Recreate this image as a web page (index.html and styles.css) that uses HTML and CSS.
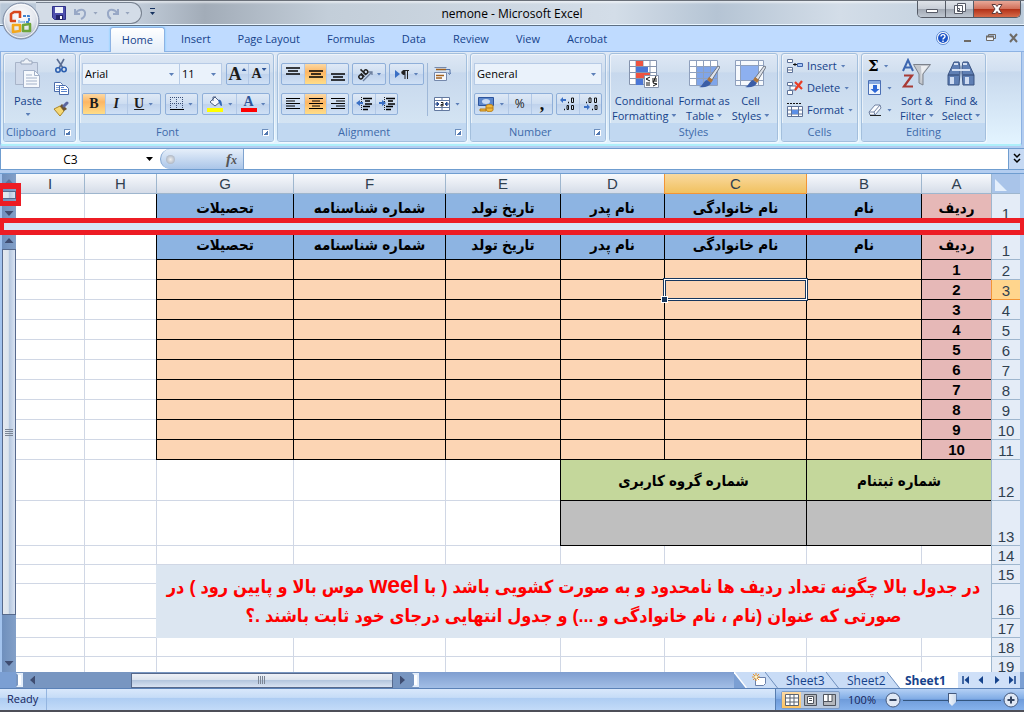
FILE: index.html
```html
<!DOCTYPE html>
<html lang="en">
<head>
<meta charset="utf-8">
<title>nemone - Microsoft Excel</title>
<link rel="stylesheet" href="styles.css">
</head>
<body>
<div class="app">
  <header class="titlebar">
    <button class="office" aria-label="Office Button">
      <svg width="40" height="40" viewBox="0 0 40 40">
        <defs><radialGradient id="orb" cx=".5" cy=".35" r=".65"><stop offset="0" stop-color="#fff"/><stop offset=".6" stop-color="#e3e7ee"/><stop offset="1" stop-color="#a9b4c6"/></radialGradient></defs>
        <circle cx="20" cy="20" r="18" fill="url(#orb)" stroke="#7d8ba3"/>
        <circle cx="20" cy="20" r="16.500" fill="none" stroke="#fff" stroke-opacity=".8"/>
        <g fill="none" stroke-width="2.600" stroke-linejoin="round">
          <path d="M15 20h-5v-7l3-2h6v6" stroke="#d8461b"/>
          <path d="M22 15h6v6h-5" stroke="#4184d0" stroke-width="2" stroke-dasharray="3 1"/>
          <path d="M19 24v6l-7 1v-7z" stroke="#f3a71b"/>
          <path d="M22 24v6h7v-7z" stroke="#6da53a"/>
          <path d="M18 19v3M19 21h5" stroke="#8fb8e6" stroke-width="1.500"/>
        </g>
      </svg>
    </button>
    <div class="qat">
      <button aria-label="Save"><svg width="14" height="14" viewBox="0 0 14 14"><path d="M.5.5h13v13h-11l-2-2z" fill="#4d4fae" stroke="#30328a"/><path d="M3 1h8v6H3z" fill="#eef2fb"/><path d="M4 9h7v5H4z" fill="#23246a"/><path d="M8 10h2v3H8z" fill="#fff"/></svg></button>
      <button aria-label="Undo"><svg width="13" height="13" viewBox="0 0 13 13"><path d="M1 2v5h5M1.500 6.500C5 1 12 2 11 7c0 2-2 4-4 5" fill="none" stroke="#98a8c6" stroke-width="2"/></svg></button>
      <i class="dd pale"></i>
      <button aria-label="Redo"><svg width="13" height="13" viewBox="0 0 13 13"><path d="M12 2v5H7M11.500 6.500C8 1 1 2 2 7c0 2 1 4 3 5" fill="none" stroke="#98a8c6" stroke-width="2"/></svg></button>
      <i class="dd pale"></i>
    </div>
    <button class="qat-more" aria-label="Customize Quick Access Toolbar"><svg width="7" height="8" viewBox="0 0 7 8"><path d="M1 .5h5" stroke="#15315f"/><path d="M1 4h5L3.500 7z" fill="#15315f"/></svg></button>
    <h1 class="title">nemone - Microsoft Excel</h1>
    <div class="winbtns">
      <button aria-label="Minimize"><svg width="14" height="14" viewBox="0 0 14 14"><path d="M1.500 7.500h11v3h-11z" fill="#fff" stroke="#565a66"/></svg></button>
      <button aria-label="Restore"><svg width="14" height="14" viewBox="0 0 14 14"><path d="M4.500 1.500h8v8h-8zM1.500 3.500h8v8h-8zM4.500 6.500h2v2h-2z" fill="#fff" stroke="#565a66"/></svg></button>
      <button class="close" aria-label="Close"><svg width="14" height="14" viewBox="0 0 14 14"><path d="M2 2.500h3.500L7 4.500l1.500-2H12L9 7l3 4.500H8.500L7 9.500l-1.500 2H2L5 7z" fill="#fff" stroke="#5e3a3a"/></svg></button>
    </div>
  </header>

  <nav class="tabs">
    <button>Menus</button><button class="on">Home</button><button>Insert</button><button>Page Layout</button><button>Formulas</button><button>Data</button><button>Review</button><button>View</button><button>Acrobat</button>
    <div class="docbtns">
      <button aria-label="Help"><svg width="14" height="14" viewBox="0 0 14 14"><circle cx="7" cy="7" r="6.500" fill="#fff" stroke="#5b87d0"/><circle cx="7" cy="7" r="5" fill="#1d55c8"/><path d="M5 5.500c0-2.500 4-2.500 4 0 0 1.500-2 1.300-2 3M7 9.500V11" fill="none" stroke="#fff" stroke-width="1.400"/></svg></button>
      <button aria-label="Minimize workbook"><svg width="10" height="10" viewBox="0 0 10 10"><path d="M1 8h7" stroke="#6f6b66" stroke-width="2"/></svg></button>
      <button aria-label="Restore workbook"><svg width="10" height="10" viewBox="0 0 10 10"><path d="M2.500 3V1.500h7v4H8" fill="none" stroke="#6f6b66"/><path d="M.5 3.500h7v4h-7z" fill="#e8f0fb" stroke="#6f6b66"/><path d="M0 3.500h8" stroke="#6f6b66" stroke-width="2"/></svg></button>
      <button aria-label="Close workbook"><svg width="10" height="10" viewBox="0 0 10 10"><path d="M1 1l7 8M8 1L1 9" stroke="#6f6b66" stroke-width="2"/></svg></button>
    </div>
  </nav>

  <section class="ribbon">
    <div class="group g-clip">
      <div class="body">
        <button class="big paste"><svg width="32" height="32" viewBox="0 0 32 32"><path d="M3.500 4.500h22v22h-22z" fill="#cfd9ea" stroke="#a8b4c9"/><path d="M9 6V3h3c0-3 5-3 5 0h3v3z" fill="#eef2f8" stroke="#9aa7bd"/><path d="M11.500 12.500h11l5 5v12h-16z" fill="#f6f9fd" stroke="#a3b1c9"/><path d="M22.500 12.500v5h5M14 17h6M14 20h11M14 23h11M14 26h11" fill="none" stroke="#a3b1c9"/></svg><span>Paste</span><i class="dd"></i></button>
        <div class="col">
          <button aria-label="Cut"><svg width="16" height="16" viewBox="0 0 16 16"><path d="M4 1l6 9M11 1L6 10" stroke="#5b6e93" stroke-width="1.600"/><circle cx="5" cy="12" r="2.200" fill="none" stroke="#2c5fb0" stroke-width="1.600"/><circle cx="11" cy="11.500" r="2.200" fill="none" stroke="#2c5fb0" stroke-width="1.600"/></svg></button>
          <button aria-label="Copy"><svg width="16" height="16" viewBox="0 0 16 16"><path d="M1.500 2.500h6l2 2v7h-8z" fill="#fff" stroke="#4b6cab"/><path d="M3 5.500h4M3 7.500h4M3 9.500h3" stroke="#7f9fd6"/><path d="M6.500 5.500h6l3 3v6h-9z" fill="#fff" stroke="#4b6cab"/><path d="M8 9.500h6M8 11.500h6M8 7.500h3" stroke="#5b84cc"/></svg></button>
          <button aria-label="Format Painter"><svg width="16" height="16" viewBox="0 0 16 16"><path d="M1 8l6-3 4 5-4 5z" fill="#f5d774" stroke="#a98527"/><path d="M7 5l2-2 5 5-3 2z" fill="#6b5333"/><path d="M11 5l3-3" stroke="#5a67a0" stroke-width="3" stroke-linecap="round"/></svg></button>
        </div>
      </div>
      <div class="cap">Clipboard<i class="launch"></i></div>
    </div>

    <div class="group g-font">
      <div class="body rows">
        <div class="row">
          <span class="combos"><span class="combo"><select aria-label="Font"><option>Arial</option></select></span><span class="combo size"><select aria-label="Font size"><option>11</option></select></span></span>
          <span class="btns"><button class="serif" aria-label="Grow Font"><b class="l">A</b><i class="up"></i></button><button class="serif" aria-label="Shrink Font"><b class="s">A</b><i class="dn"></i></button></span>
        </div>
        <div class="row">
          <span class="btns"><button class="serif hot"><b>B</b></button><button class="serif"><em>I</em></button><button class="serif wide"><u>U</u><i class="dd"></i></button></span>
          <span class="btns"><button class="bord" aria-label="Borders"><svg width="14" height="14" viewBox="0 0 14 14"><path d="M.5 0v12M6.500 0v12M12.500 0v12M0 .5h13M0 6.500h13" stroke="#3b4f77" stroke-dasharray="1 1"/><path d="M0 12.500h14" stroke="#000" stroke-width="1"/></svg><i class="dd"></i></button></span>
          <span class="btns"><button class="wide" aria-label="Fill Color"><svg width="17" height="16" viewBox="0 0 17 16"><path d="M3 6l5-5 5 5-5 4z" fill="#f4f7fc" stroke="#4f6084"/><path d="M6 5V1h3" fill="none" stroke="#4f6084"/><path d="M11 4c3-1 4 2 4 6-2 0-2-2-3-3z" fill="#3367b8"/><path d="M0 12h16v4H0z" fill="#ff0"/></svg><i class="dd"></i></button><button class="wide" aria-label="Font Color"><span class="fc">A</span><i class="dd"></i></button></span>
        </div>
      </div>
      <div class="cap">Font<i class="launch"></i></div>
    </div>

    <div class="group g-align">
      <div class="body split">
        <div class="rows">
          <div class="row">
            <span class="btns"><button aria-label="Top Align"><svg width="14" height="16" viewBox="0 0 14 16"><path d="M0 2h14M2 5h10M0 8h14" stroke="#000" stroke-width="1.500"/></svg></button><button class="hot" aria-label="Middle Align"><svg width="14" height="16" viewBox="0 0 14 16"><path d="M0 5h14M2 8h10M0 11h14" stroke="#000" stroke-width="1.500"/></svg></button><button aria-label="Bottom Align"><svg width="14" height="16" viewBox="0 0 14 16"><path d="M0 8h14M2 11h10M0 14h14" stroke="#000" stroke-width="1.500"/></svg></button></span>
            <span class="btns"><button class="bord" aria-label="Orientation"><svg width="16" height="16" viewBox="0 0 16 16"><path d="M6 15L15 6M12 6h3v3" fill="none" stroke="#6d7f9e" stroke-width="1.300"/><g transform="rotate(-45 6 8)" fill="none" stroke="#222" stroke-width="1.500"><circle cx="2.500" cy="8.500" r="2"/><path d="M5 6v5M7.500 3v8"/><circle cx="9.500" cy="8.500" r="2"/></g></svg><i class="dd"></i></button></span>
            <span class="btns"><button class="wide" aria-label="Text Direction"><svg width="15" height="12" viewBox="0 0 15 12"><path d="M0 2l5 4-5 4z" fill="#3a6fc4"/><path d="M9.500 2.500H9c-3 0-3 4 0 4h.5zM10 2v9M12.500 2v9M9 2.500h5" fill="#222" stroke="#222"/></svg><i class="dd"></i></button></span>
          </div>
          <div class="row">
            <span class="btns"><button aria-label="Align Left"><svg width="14" height="12" viewBox="0 0 14 12"><path d="M0 .5h14M0 3h9M0 5.500h14M0 8h9M0 10.500h14" stroke="#000"/></svg></button><button class="hot" aria-label="Center"><svg width="14" height="12" viewBox="0 0 14 12"><path d="M0 .5h14M3 3h8M0 5.500h14M3 8h8M0 10.500h14" stroke="#000"/></svg></button><button aria-label="Align Right"><svg width="14" height="12" viewBox="0 0 14 12"><path d="M0 .5h14M5 3h9M0 5.500h14M5 8h9M0 10.500h14" stroke="#000"/></svg></button></span>
            <span class="btns"><button aria-label="Decrease Indent"><svg width="16" height="14" viewBox="0 0 16 14"><path d="M7 1.500h9M9 4h5M9 7h7M7 9.500h7M7 12.500h5" stroke="#000" stroke-width="1.500"/><path d="M5.500 0v14" stroke="#222" stroke-dasharray="1 1"/><path d="M0 6l4-3v2h3v2H4v2z" fill="#3a6fc4"/></svg></button><button aria-label="Increase Indent"><svg width="16" height="14" viewBox="0 0 16 14"><path d="M7 1.500h9M9 4h5M9 7h7M7 9.500h7M7 12.500h5" stroke="#000" stroke-width="1.500"/><path d="M5.500 0v14" stroke="#222" stroke-dasharray="1 1"/><path d="M7 6L3 3v2H0v2h3v2z" fill="#3a6fc4"/></svg></button></span>
          </div>
        </div>
        <div class="rows side">
          <button aria-label="Wrap Text"><svg width="17" height="16" viewBox="0 0 17 16"><path d="M.5 1.500h12M.5 6.500h12v8H.5z" fill="#f4f7fc" stroke="#7488ac"/><path d="M2 3.500h10" stroke="#a1611f" stroke-width="1.500"/><path d="M2 9.500h8M2 12h6" stroke="#a1611f" stroke-width="1.500"/><path d="M12 3.500h4v4m-2-1l1.500 2L17 6.500" fill="none" stroke="#5272a8"/></svg></button>
          <button aria-label="Merge and Center"><svg width="16" height="14" viewBox="0 0 16 14"><path d="M.5.5h15v13H.5zM8 0v4M8 10v4M0 3.500h16M0 10.500h16" fill="#fff" stroke="#62789f"/><path d="M1 7h3M15 7h-3M3 5l2 2-2 2zM13 5l-2 2 2 2z" stroke="#2d4f8f" fill="#2d4f8f"/><path d="M7 5.500h2v3.500H7V7.500h2" fill="none" stroke="#222"/></svg><i class="dd"></i></button>
        </div>
      </div>
      <div class="cap">Alignment<i class="launch"></i></div>
    </div>

    <div class="group g-num">
      <div class="body rows">
        <div class="row"><span class="combo fmt"><select aria-label="Number format"><option>General</option></select></span></div>
        <div class="row">
          <span class="btns"><button class="wide" aria-label="Accounting Format"><svg width="17" height="16" viewBox="0 0 17 16"><path d="M.5 1.500h15v8H.5z" fill="#5c86ca" stroke="#2d549c"/><ellipse cx="8" cy="5.500" rx="4" ry="2.500" fill="#c9daf4"/><path d="M8 10c0-2 7-2 7 0v4c0 2-7 2-7 0zM2 13h6v2H2z" fill="#f2b93c" stroke="#b77d18"/><path d="M8 12h7" stroke="#b77d18"/></svg><i class="dd"></i></button><button class="mid">%</button><button class="comma">,</button></span>
          <span class="btns dec"><button aria-label="Increase Decimal"><svg width="16" height="14" viewBox="0 0 16 14"><path d="M0 3l3-3v2h3v2H3v2z" fill="#3a6fc4"/><path d="M8 5.500h1M4 12.500h1" stroke="#111" stroke-width="1.500"/><path d="M11.500 1h2v4.500h-2zM7 8.500h1.500v4H7zM11.500 8.500h2v4h-2z" fill="none" stroke="#111"/></svg></button><button aria-label="Decrease Decimal"><svg width="16" height="14" viewBox="0 0 16 14"><path d="M7 10L4 7v2H1v2h3v2z" fill="#3a6fc4"/><path d="M3 5.500h1M9 12.500h1" stroke="#111" stroke-width="1.500"/><path d="M6 1h2v4.500H6zM11.500 1h2v4.500h-2zM12 8.500h2v4h-2z" fill="none" stroke="#111"/></svg></button></span>
        </div>
      </div>
      <div class="cap">Number<i class="launch"></i></div>
    </div>

    <div class="group g-styles">
      <div class="body bigs">
        <button class="big"><svg width="32" height="32" viewBox="0 0 32 32"><path d="M1.500 2.500h27v24h-27z" fill="#fff" stroke="#8493ad"/><path d="M8 2v25M15 2v25M22 2v25M1 8.500h28M1 14.500h28M1 20.500h28" stroke="#8493ad"/><path d="M8 3h7v5H8zM8 15h14v5H8z" fill="#ee5340"/><path d="M8 9h12v5H8zM8 21h7v6H8z" fill="#4a76d6"/><path d="M16.500 17.500h14v12h-14z" fill="#fff" stroke="#8493ad"/><path d="M22 19l-4 2 4 2M18 25h4M18 27h4M24 21h5M24 23h5M28 18l-3 7M25 25l4 1-4 2" fill="none" stroke="#111"/></svg><span>Conditional<br>Formatting<i class="dd"></i></span></button>
        <button class="big"><svg width="32" height="32" viewBox="0 0 32 32"><path d="M1.500 2.500h28v25h-28z" fill="#fff" stroke="#8fa0bd"/><path d="M9 9h20v18H9z" fill="#7fa5ea"/><path d="M8.500 2v25M15.500 2v25M22.500 2v25M1 8.500h28M1 14.500h28M1 20.500h28" stroke="#8fa0bd"/><path d="M30 8l-9 12 3 2 8-13z" fill="#dfe3ea" stroke="#6e7683"/><path d="M21 19l4 3-2 3-4-3z" fill="#b0763a"/><path d="M19 22l4 3c-2 4-7 5-12 4 4-1 4-6 8-7z" fill="#3a5da6"/></svg><span>Format as<br>Table<i class="dd"></i></span></button>
        <button class="big"><svg width="32" height="32" viewBox="0 0 32 32"><path d="M1.500 2.500h28v25h-28z" fill="#f6f9fd" stroke="#8fa0bd"/><path d="M6.500 2v25M24.500 2v25M1 7.500h28M1 22.500h28" stroke="#8fa0bd"/><path d="M7 8h17v14H7z" fill="#8db0f0"/><path d="M30 8l-9 12 3 2 8-13z" fill="#dfe3ea" stroke="#6e7683"/><path d="M21 19l4 3-2 3-4-3z" fill="#b0763a"/><path d="M19 22l4 3c-2 4-7 5-12 4 4-1 4-6 8-7z" fill="#3a5da6"/></svg><span>Cell<br>Styles<i class="dd"></i></span></button>
      </div>
      <div class="cap">Styles</div>
    </div>

    <div class="group g-cells">
      <div class="body list">
        <button><svg width="16" height="16" viewBox="0 0 16 16"><path d="M.5 1.500h5v3h-5zM.5 9.500h5v5h-5zM.5 12h5" fill="#fff" stroke="#5f7398"/><path d="M6 6.500h4M8 5v3" stroke="#111"/><path d="M10.500 5.500h5v3h-5z" fill="#a9c5f2" stroke="#3e62a8"/></svg>Insert<i class="dd"></i></button>
        <button><svg width="16" height="16" viewBox="0 0 16 16"><path d="M.5 2.500h5v3h-5zM.5 10.500h5v4h-5zM3 6h6v4H3z" fill="#fff" stroke="#5f7398"/><path d="M8 2l7 7M15 1L8 10" stroke="#ea3c23" stroke-width="2.200"/></svg>Delete<i class="dd"></i></button>
        <button><svg width="16" height="16" viewBox="0 0 16 16"><path d="M.5 4.500h15v10H.5zM4.500 4v11M11.500 4v11M0 8h16M0 12h16" fill="#fff" stroke="#5f7398"/><path d="M5 8h6v4H5z" fill="#5c8fe6"/><path d="M0 1.500h15" stroke="#111" stroke-dasharray="2 1"/></svg>Format<i class="dd"></i></button>
      </div>
      <div class="cap">Cells</div>
    </div>

    <div class="group g-edit">
      <div class="body bigs">
        <div class="minis">
          <button aria-label="AutoSum"><b>Σ</b><i class="dd"></i></button>
          <button aria-label="Fill"><svg width="14" height="16" viewBox="0 0 14 16"><path d="M.5.5h12v14H.5z" fill="#eef4fd" stroke="#4b6fb4"/><path d="M1 1h11v3H1z" fill="#87a9e0"/><path d="M5 5h4v4h2.500L7 13 2.500 9H5z" fill="#2c66d6"/></svg><i class="dd"></i></button>
          <button aria-label="Clear"><svg width="14" height="14" viewBox="0 0 14 14"><path d="M1 9l6-7h5l1 3-6 7H2z" fill="#fafcff" stroke="#7283a3"/><path d="M1 9h5l1 3M6 9l6-7" fill="none" stroke="#7283a3"/><path d="M2 12.500h11" stroke="#222"/></svg><i class="dd"></i></button>
        </div>
        <button class="big"><svg width="32" height="32" viewBox="0 0 32 32"><path d="M2 13L7 2l5 11M4 9.500h6" fill="none" stroke="#3c66b0" stroke-width="2"/><path d="M3 17.500h8L3 28.500h9" fill="none" stroke="#a83a35" stroke-width="2.200"/><path d="M12.500 6.500h17L22 16v11l-4-2v-9z" fill="#c3c7cd" stroke="#7c828c"/><path d="M20 8h7l-6 8v9" fill="#eceef1"/></svg><span>Sort &amp;<br>Filter<i class="dd"></i></span></button>
        <button class="big"><svg width="32" height="32" viewBox="0 0 32 32"><path d="M9 4h5l1 5v6l-1 12H3V17z" fill="#5f7fb4" stroke="#3b5482"/><path d="M18 4h5l6 13v10H18l-1-12V9z" fill="#5f7fb4" stroke="#3b5482"/><path d="M5 19h4v7H5zM20 19h4v7h-4z" fill="#cfdcf2"/><path d="M9 6h4M18 6h4M7 12h18" stroke="#d5e0f3" stroke-width="2"/><path d="M3 17h11M18 17h11" stroke="#2f456f"/></svg><span>Find &amp;<br>Select<i class="dd"></i></span></button>
      </div>
      <div class="cap">Editing</div>
    </div>
  </section>

  <div class="fbar">
    <input class="namebox" aria-label="Name box" value="C3"><i class="dd dark"></i>
    <button class="fx" aria-label="Insert Function"><i class="dot"></i><em>f<small>x</small></em></button>
    <input class="formula" aria-label="Formula bar">
    <button class="expand" aria-label="Expand Formula Bar"><svg width="8" height="12" viewBox="0 0 8 12"><path d="M1 1l3 3 3-3M1 6l3 3 3-3" fill="none" stroke="#000" stroke-width="1.500"/></svg></button>
  </div>

  <main class="work">
    <div class="pane top">
      <div class="vbar"><i class="a up2 faint"></i><i class="vthumb short"></i><i class="a dn2"></i></div>
      <table class="grid" dir="rtl">
        <colgroup><col class="ch"><col class="ca"><col class="cb"><col class="cc"><col class="cd"><col class="cb"><col class="cf"><col class="cg"><col class="cH"><col></colgroup>
        <thead><tr><th class="corner"><svg width="12" height="12" viewBox="0 0 12 12"><path d="M0 0v12h12z" fill="#e4effc"/></svg></th><th>A</th><th class="edge">B</th><th class="sel">C</th><th>D</th><th>E</th><th>F</th><th>G</th><th>H</th><th>I</th></tr></thead>
        <tbody><tr class="names"><th>1</th><td class="pink">ردیف</td><td>نام</td><td>نام خانوادگی</td><td>نام پدر</td><td>تاریخ تولد</td><td>شماره شناسنامه</td><td>تحصیلات</td><td class="e"></td><td class="e"></td></tr></tbody>
      </table>
      <div class="gutter"></div>
    </div>
    <div class="splitter"></div>
    <div class="pane bottom">
      <div class="vbar"><i class="a up2"></i><i class="vthumb long"><svg width="8" height="7" viewBox="0 0 8 7"><path d="M0 .5h8M0 2.500h8M0 4.500h8M0 6.500h8" stroke="#7b8594"/></svg></i><i class="a dn2"></i></div>
      <table class="grid" dir="rtl">
        <colgroup><col class="ch"><col class="ca"><col class="cb"><col class="cc"><col class="cd"><col class="cb"><col class="cf"><col class="cg"><col class="cH"><col></colgroup>
        <tbody>
        <tr class="names"><th>1</th><td class="pink">ردیف</td><td>نام</td><td>نام خانوادگی</td><td>نام پدر</td><td>تاریخ تولد</td><td>شماره شناسنامه</td><td>تحصیلات</td><td class="e"></td><td class="e"></td></tr>
        <tr class="data"><th>2</th><td class="pink">1</td><td></td><td></td><td></td><td></td><td></td><td></td><td class="e"></td><td class="e"></td></tr>
        <tr class="data"><th class="sel">3</th><td class="pink">2</td><td></td><td class="cur"><i></i></td><td></td><td></td><td></td><td></td><td class="e"></td><td class="e"></td></tr>
        <tr class="data"><th>4</th><td class="pink">3</td><td></td><td></td><td></td><td></td><td></td><td></td><td class="e"></td><td class="e"></td></tr>
        <tr class="data"><th>5</th><td class="pink">4</td><td></td><td></td><td></td><td></td><td></td><td></td><td class="e"></td><td class="e"></td></tr>
        <tr class="data"><th>6</th><td class="pink">5</td><td></td><td></td><td></td><td></td><td></td><td></td><td class="e"></td><td class="e"></td></tr>
        <tr class="data"><th>7</th><td class="pink">6</td><td></td><td></td><td></td><td></td><td></td><td></td><td class="e"></td><td class="e"></td></tr>
        <tr class="data"><th>8</th><td class="pink">7</td><td></td><td></td><td></td><td></td><td></td><td></td><td class="e"></td><td class="e"></td></tr>
        <tr class="data"><th>9</th><td class="pink">8</td><td></td><td></td><td></td><td></td><td></td><td></td><td class="e"></td><td class="e"></td></tr>
        <tr class="data"><th>10</th><td class="pink">9</td><td></td><td></td><td></td><td></td><td></td><td></td><td class="e"></td><td class="e"></td></tr>
        <tr class="data"><th>11</th><td class="pink">10</td><td></td><td></td><td></td><td></td><td></td><td></td><td class="e"></td><td class="e"></td></tr>
        <tr class="r12"><th>12</th><td colspan="2" class="green">شماره ثبتنام</td><td colspan="2" class="green">شماره گروه کاربری</td><td></td><td></td><td></td><td></td><td></td></tr>
        <tr class="r13"><th>13</th><td colspan="2" class="gray"></td><td colspan="2" class="gray"></td><td></td><td></td><td></td><td></td><td></td></tr>
        <tr class="r14 flat"><th>14</th><td></td><td></td><td></td><td></td><td></td><td></td><td></td><td></td><td></td></tr>
        <tr class="r14"><th>15</th><td colspan="7" rowspan="3" class="note">در جدول بالا چگونه تعداد ردیف ها نامحدود و به صورت کشویی باشد ( با <span class="latin">weel</span> موس بالا و پایین رود ) در<br>صورتی که عنوان (نام ، نام خانوادگی و ...) و جدول انتهایی درجای خود ثابت باشند .؟</td><td></td><td></td></tr>
        <tr class="r16"><th>16</th><td></td><td></td></tr>
        <tr class="r14"><th>17</th><td></td><td></td></tr>
        <tr class="r14"><th>18</th><td></td><td></td><td></td><td></td><td></td><td></td><td></td><td></td><td></td></tr>
        <tr class="r14"><th>19</th><td></td><td></td><td></td><td></td><td></td><td></td><td></td><td></td><td></td></tr>
        </tbody>
      </table>
      <div class="gutter"></div>
    </div>
    <div class="mark-split"></div>
    <div class="mark-thumb"></div>
  </main>

  <div class="hrow">
    <div class="hbar"><i class="stub"></i><i class="a lf"></i><i class="hthumb"><svg width="8" height="8" viewBox="0 0 8 8"><path d="M.5 0v8M2.500 0v8M4.500 0v8M6.500 0v8" stroke="#7b8594"/></svg></i><i class="a rt"></i><i class="stub"></i></div>
    <div class="fill"></div>
    <div class="sheets">
      <button class="new" aria-label="Insert Worksheet"><svg class="slant" width="13" height="16" viewBox="0 0 13 16"><path d="M0 0h13v16z" fill="#c9dcf6"/><path d="M0 0l12.500 16" stroke="#fff" stroke-width="1.500"/></svg><svg width="16" height="14" viewBox="0 0 16 14"><path d="M4.500 4.500h10v6l-2 2h-8z" fill="#fff" stroke="#6a80ab"/><path d="M5 0v8M1 4h8M2 1l6 6M8 1L2 7" stroke="#e8952b"/><circle cx="5" cy="4" r="1.500" fill="#fff6c8"/></svg></button>
      <button><svg class="slant" width="13" height="16" viewBox="0 0 13 16"><path d="M0 0h13v16z" fill="#c9dcf6"/><path d="M0 0l12.500 16" stroke="#6f8fbd"/></svg><span>Sheet3</span></button>
      <button><svg class="slant" width="13" height="16" viewBox="0 0 13 16"><path d="M0 0h13v16z" fill="#c9dcf6"/><path d="M0 0l12.500 16" stroke="#6f8fbd"/></svg><span>Sheet2</span></button>
      <button class="on"><svg class="slant" width="13" height="16" viewBox="0 0 13 16"><path d="M0 0h13v16z" fill="#fff"/><path d="M0 0l12.500 16" stroke="#6f8fbd"/></svg><span>Sheet1</span></button>
    </div>
    <div class="nav">
      <button aria-label="First sheet"><svg width="8" height="8" viewBox="0 0 8 8"><path d="M1 0v8" stroke="#15428b" stroke-width="1.500"/><path d="M7 0v8L2.500 4z" fill="#15428b"/></svg></button>
      <button aria-label="Previous sheet"><svg width="8" height="8" viewBox="0 0 8 8"><path d="M6 0v8L1.500 4z" fill="#15428b"/></svg></button>
      <button aria-label="Next sheet"><svg width="8" height="8" viewBox="0 0 8 8"><path d="M2 0v8l4.500-4z" fill="#15428b"/></svg></button>
      <button aria-label="Last sheet"><svg width="8" height="8" viewBox="0 0 8 8"><path d="M7 0v8" stroke="#15428b" stroke-width="1.500"/><path d="M1 0v8l4.500-4z" fill="#15428b"/></svg></button>
    </div>
  </div>

  <footer class="status">
    <span class="ready">Ready</span>
    <div class="right">
      <span class="views">
        <button class="hot" aria-label="Normal"><svg width="14" height="12" viewBox="0 0 14 12"><path d="M.5.5h13v11H.5z" fill="#fff" stroke="#5d6470"/><path d="M5 0v12M9 0v12M0 4h14M0 8h14" stroke="#5d6470"/></svg></button>
        <button aria-label="Page Layout"><svg width="14" height="12" viewBox="0 0 14 12"><path d="M.5.5h12v11H.5z" fill="#b5b8bd" stroke="#4f545d"/><path d="M3.500 2.500h6v7h-6z" fill="#fff" stroke="#4f545d"/><path d="M5 4.500h3M5 6.500h3" stroke="#4f545d"/></svg></button>
        <button aria-label="Page Break Preview"><svg width="14" height="12" viewBox="0 0 14 12"><path d="M.5.5h12v11H.5z" fill="#b5b8bd" stroke="#4f545d"/><path d="M1 1h4v6H1zM6 1h3v6H6z" fill="#fff"/><path d="M5 0v7.500M9 0v7.500M0 7.500h9" stroke="#4f545d" fill="none"/></svg></button>
      </span>
      <span class="pct">100%</span>
      <button aria-label="Zoom Out"><svg width="16" height="16" viewBox="0 0 16 16"><circle cx="8" cy="8" r="7" fill="#dfe8f5" stroke="#44597d"/><path d="M4.500 8h7" stroke="#33435f" stroke-width="2"/></svg></button>
      <input type="range" min="0" max="100" value="50" aria-label="Zoom">
      <button aria-label="Zoom In"><svg width="16" height="16" viewBox="0 0 16 16"><circle cx="8" cy="8" r="7" fill="#dfe8f5" stroke="#44597d"/><path d="M4.500 8h7M8 4.500v7" stroke="#33435f" stroke-width="2"/></svg></button>
    </div>
  </footer>
</div>
</body>
</html>
```
FILE: styles.css
```css
* { box-sizing: border-box; }
html, body { height: 100%; margin: 0; }
body { font: 11px/14px "Open Sans", "Noto Sans", sans-serif; color: #15428b; overflow: hidden; }
button, input, select { font: inherit; color: inherit; margin: 0; padding: 0; border: 0; background: none; border-radius: 0; }
button { display: flex; align-items: center; justify-content: center; white-space: nowrap; }
i, em { flex: none; }
svg { display: block; flex: none; }
.app { height: 100vh; display: flex; flex-direction: column; background: #b3cdf0; border-bottom: 2px solid #4e4f58; }

/* down arrows shared by every drop-down control */
.dd { display: inline-block; width: 5px; height: 3px; background: #5c7fb8; clip-path: polygon(0 0, 100% 0, 50% 100%); }
.dd.pale { background: #97a5bd; }
.dd.dark { background: #000; width: 7px; height: 4px; margin-right: 7px; }

/* title bar */
.titlebar { position: relative; height: 26px; flex: none; display: flex; align-items: flex-start; justify-content: space-between; background: linear-gradient(90deg, #b9c8d8, #c3cedb 13%, #a2acb8 20%, #c3ced9 32%, #d3dde8 60%, #b5c4d4 70%, #d3dde8 82%, #b9c9d9); border-top: 1px solid #6a7079; border-bottom: 1px solid #5d6f83; box-shadow: inset 0 2px 2px #ffffff88, inset 0 -1px 0 #eaf6ff; }
.office { position: absolute; left: 1px; top: 0; z-index: 3; }
.qat { display: flex; align-items: center; gap: 8px; height: 22px; margin: 1px 0 0 36px; padding: 0 11px 0 16px; border: 1px solid #77818f; border-left: 0; border-radius: 0 11px 11px 0; background: #d3dce7; }
.qat .dd { margin-left: -2px; }
.qat-more { margin: 7px auto 0 7px; }
.title { position: absolute; left: 0; right: 0; top: 4px; margin: 0; text-align: center; font-size: 12px; line-height: 18px; font-weight: 400; color: #000; }
.winbtns { position: relative; display: flex; height: 17px; margin-right: 3px; border: 1px solid #555b66; border-top: 0; border-radius: 0 0 5px 5px; overflow: hidden; }
.winbtns button { width: 28px; background: linear-gradient(#dfe3e9, #c8ced7 48%, #a0a7b2 50%, #bfc7d1); border-right: 1px solid #555b66; }
.winbtns .close { width: 46px; border: 0; background: linear-gradient(#e8a898, #d2705a 48%, #b12f16 50%, #d66a4a); }

/* ribbon tabs */
.tabs { flex: none; height: 26px; display: flex; align-items: stretch; gap: 5px; padding: 1px 0 0 48px; background: #bfdbff; border-bottom: 1px solid #8db2e3; }
.tabs > button { padding: 0 11px; }
.tabs > .on { border: 1px solid #8db2e3; border-bottom: 0; border-radius: 3px 3px 0 0; background: linear-gradient(#fff, #e3edf9); margin-bottom: -1px; padding: 0 11px; box-shadow: 0 0 2px #6cf; }
.docbtns { display: flex; gap: 13px; margin-left: auto; padding: 0 5px 2px 0; }

/* ribbon */
.ribbon { flex: none; height: 94px; display: flex; gap: 3px; padding: 1px 3px 2px 2px; border: 1px solid #8db2e3; border-top: 0; border-bottom: 2px solid #aeeffa; border-radius: 0 0 3px 3px; background: linear-gradient(#dfe9f5, #d2e0f1 20%, #c8d9ed 22%, #e3f4ff); margin-right: 2px; }
.group { flex: none; display: flex; flex-direction: column; border: 1px solid #a3bfdd; border-radius: 3px; background: linear-gradient(#dee8f5, #d1dfef 20%, #c7d8ed 22%, #d8e8f5); box-shadow: inset 1px 1px 0 #ffffff88, 1px 1px 0 #ffffff88; overflow: hidden; }
.body { flex: 1; display: flex; min-height: 0; }
.cap { height: 18px; flex: none; display: flex; align-items: center; justify-content: center; background: #c1d8f1; color: #3e6aaa; }
.launch { width: 7px; height: 7px; border: 1px solid #6d8fbe; border-right-color: #fff; border-bottom-color: #fff; background: linear-gradient(135deg, #fff 50%, #5278b0 50%); }
.g-clip { width: 73px; } .g-font { width: 195px; } .g-align { width: 190px; } .g-num { width: 136px; } .g-styles { width: 169px; } .g-cells { width: 77px; } .g-edit { width: 125px; }
.cap .launch { margin-left: auto; margin-right: 4px; }
.g-clip .cap { padding-left: 2px; }
.g-font .cap { padding-left: 76px; } .g-align .cap { padding-left: 60px; } .g-num .cap { padding-left: 38px; }
.body.rows, .split .rows { display: flex; flex-direction: column; gap: 8px; padding: 9px 3px 0; }
.row { display: flex; height: 22px; gap: 3px; }
.g-font .body { padding-left: 2px; }
.g-font .row { gap: 4px; }
.combos { display: flex; }
.combo { position: relative; display: flex; width: 98px; border: 1px solid #b7cbe6; background: #eaf2fb; }
.combo.size { width: 42px; border-left: 0; }
.combo.fmt { width: 129px; }
.combo select { flex: 1; min-width: 0; appearance: none; padding-left: 2px; color: #000; }
.combo::after { content: ""; position: absolute; right: 5px; top: 9px; width: 5px; height: 3px; background: #5c7fb8; clip-path: polygon(0 0, 100% 0, 50% 100%); }
.btns { display: flex; border: 1px solid #8fafd9; border-radius: 2px; background: linear-gradient(#dfe9f6, #cdddf1 48%, #bfd2ec 50%, #cfe0f5); overflow: hidden; }
.btns button { width: 22px; gap: 4px; border-left: 1px solid #b2c8e6; }
.btns button:first-child { border-left: 0; }
.btns button.wide { width: 33px; }
.btns button.bord { width: 32px; }
.btns .hot { background: linear-gradient(#fcd9a4, #fdb663 40%, #ffdd88); }
.serif { font: 14px/18px "Liberation Serif", serif; color: #1c1c1c; }
.serif .l { font-size: 18px; } .serif .s { font-size: 14px; }
.g-font .row:first-child .btns button { width: 21px; gap: 0; align-items: center; }
.serif em { font-weight: 700; }
.serif u { font-weight: 700; }
.up, .dn { width: 5px; height: 3px; background: #2f5597; align-self: flex-start; margin-top: 4px; clip-path: polygon(50% 0, 100% 100%, 0 100%); }
.dn { clip-path: polygon(0 0, 100% 0, 50% 100%); }
.fc { font: 700 14px/12px "Liberation Serif", serif; border-bottom: 4px solid #f00; padding: 0 3px; color: #2f5597; height: 16px; }
.split .side { border-left: 1px solid #9fb8d8; padding: 0 0 0 6px; margin: 9px 0 7px; }
.side button { height: 22px; gap: 5px; justify-content: flex-start; }
.split > .rows:first-child { width: 149px; padding-right: 0; }
.g-num .mid { width: 23px; font-size: 12px; color: #222; }
.g-num .comma { font: 700 18px/20px "Liberation Serif", serif; color: #111; align-items: flex-start; }
.col { display: flex; flex-direction: column; justify-content: space-between; padding: 4px 0 6px 3px; }
.big { flex-direction: column; justify-content: flex-start; line-height: 15px; padding-top: 4px; }
.big span { margin-top: 3px; text-align: center; }
.big .dd { margin-left: 3px; margin-bottom: 3px; }
.paste { width: 44px; margin-left: 2px; }
.paste .dd { margin: 5px 0 0; }
.bigs { gap: 8px; padding-left: 4px; }
.g-styles .bigs { gap: 2px; padding-left: 2px; }
.list { flex-direction: column; padding: 1px 0 0 5px; }
.list button { height: 22px; justify-content: flex-start; gap: 4px; }
.minis { display: flex; flex-direction: column; padding-top: 1px; width: 26px; }
.minis button { height: 22px; gap: 5px; justify-content: flex-start; padding-left: 2px; }
.minis b { font: 700 15px/16px "DejaVu Serif", serif; color: #000; }

/* formula bar */
.fbar { flex: none; height: 22px; margin: 2px 0 4px; display: flex; align-items: center; background: #fff; border: 1px solid #6f9dd0; border-right: 0; }
.namebox { width: 145px; height: 20px; padding-right: 6px; text-align: center; font-size: 12px; color: #000; }
.fx { width: 84px; height: 20px; justify-content: space-between; padding: 0 6px 0 5px; border-radius: 10px 0 0 10px; border: 1px solid #7fa3cf; border-width: 0 1px; background: linear-gradient(#e6effa, #aac5e8); font: 700 15px/18px "Liberation Serif", serif; color: #555; }
.fx small { font-size: 12px; }
.dot { width: 9px; height: 9px; border-radius: 5px; background: radial-gradient(#eee, #97a3b5); }
.formula { flex: 1; min-width: 0; height: 20px; color: #000; }
.expand { width: 16px; height: 20px; background: #c6d9f3; border-left: 1px solid #6f9dd0; }

/* worksheet */
.work { position: relative; flex: 1; min-height: 0; display: flex; flex-direction: column; border-top: 1px solid #6f9dd0; margin-top: -1px; }
.pane { display: flex; align-items: stretch; overflow: hidden; }
.top { flex: none; height: 49px; }
.bottom { flex: 1; min-height: 0; align-items: flex-start; }
.splitter { flex: none; height: 8px; background: #d6e5f5; }
.gutter { width: 4px; flex: none; }
.vbar { flex: none; width: 16px; align-self: stretch; display: flex; flex-direction: column; align-items: center; border-left: 2px solid #a3c3ee; background: linear-gradient(90deg, #6f8fbd, #83a0c8); }
.a { width: 9px; height: 5px; background: #3f4d71; flex: none; }
.up2 { margin: 7px 0 6px; clip-path: polygon(50% 0, 100% 100%, 0 100%); }
.faint { margin: 5px 0; opacity: .5; }
.dn2 { clip-path: polygon(0 0, 100% 0, 50% 100%); margin: auto 0 6px; }
.top .dn2 { margin-bottom: 7px; }
.vthumb { width: 14px; border: 1px solid #56698c; background: linear-gradient(90deg, #e4e8ee, #dce4ee 45%, #b4c6de 50%, #d9e3f2); display: flex; align-items: center; justify-content: center; }
.short { height: 8px; margin-top: 2px; }
.long { flex: 0 1 83%; }
.grid { flex: 1; width: 0; table-layout: fixed; border-collapse: separate; border-spacing: 0; background: #fff; font: 15px/17px "Liberation Sans", "DejaVu Sans Condensed", "DejaVu Sans", sans-serif; color: #000; }
.ch { width: 29px; } .ca { width: 70px; } .cb { width: 115px; } .cc { width: 142px; } .cd { width: 104px; } .cf { width: 152px; } .cg { width: 137px; } .cH { width: 72px; }
.grid th, .grid td { padding: 0; border: 0 solid #d0d7e5; border-width: 0 0 1px 1px; }
.grid th { font-weight: 400; color: #2f4050; vertical-align: bottom; background: #e4ecf7; border-color: #9eb6ce; line-height: 16px; }
.grid thead th { height: 20px; background: linear-gradient(#f8fafd, #d5dce8); vertical-align: middle; }
.grid thead th:last-child, .grid td:last-child { border-left: 0; }
.grid thead .sel { background: linear-gradient(#f9d99f, #f1c15f); border-color: #f29536; }
.grid thead .edge { border-left-color: #f29536; }
.grid thead .corner { background: #a9c4e9; }
.corner svg { margin: 2px 13px 0 0; }
.grid tbody .sel { background: #ffd58d; border-color: #f29536; }
.names td { height: 29px; text-align: center; font-weight: 700; line-height: 20px; background: #8db4e2; border-color: #000; }
.data td { height: 20px; background: #fcd5b4; border-color: #000; }
.grid .pink { background: #e6b8b7; text-align: center; font-weight: 700; }
.grid .e { background: #fff; border-color: #d0d7e5; }
.r12 td { height: 41px; } .r13 td { height: 45px; } .r14 td { height: 19px; } .r16 td { height: 35px; }
.grid .green { background: #c4d79b; border-color: #000; text-align: center; font-weight: 700; }
.grid .gray { background: #bfbfbf; border-color: #000; }
.grid .note { background: #dce6f1; border: 0; height: auto; text-align: center; font-weight: 700; font-size: 18px; line-height: 29px; color: #f00; white-space: nowrap; }
.latin { font-size: 23px; line-height: 20px; }
.cur { position: relative; }
.cur i { position: absolute; inset: 0; border: 1px solid #17375e; outline: 1px solid #fff; box-shadow: 0 0 0 2px #17375e; }
.cur i::after { content: ""; position: absolute; left: -4px; bottom: -4px; width: 5px; height: 5px; background: #17375e; outline: 1px solid #fff; }

/* red call-outs drawn over the sheet */
.mark-split { position: absolute; left: 0; right: 0; top: 44px; height: 17px; border: solid #ed1c24; border-width: 5px 4px; }
.mark-thumb { position: absolute; left: 0; top: 9px; width: 21px; height: 23px; border: solid #ed1c24; border-width: 6px 5px 5px 3px; }

/* horizontal scroll bar and sheet tabs */
.hrow { flex: none; height: 16px; display: flex; padding-left: 16px; padding-right: 4px; background: #7b9fd3; }
.hbar { flex: 0 1 403px; display: flex; align-items: center; background: #7896c1; }
.hbar .stub { width: 7px; height: 14px; background: #fff; border: 2px solid #e4eefa; border-left-color: #7896c1; }
.hbar .lf, .hbar .rt { width: 5px; height: 9px; margin: 0 7px; clip-path: polygon(100% 0, 100% 100%, 0 50%); }
.hbar .rt { clip-path: polygon(0 0, 100% 50%, 0 100%); }
.hthumb { flex: 0 0 65%; height: 15px; margin-left: auto; border: 1px solid #56698c; background: linear-gradient(#eef1f6, #dce3ee 45%, #b4c6de 50%, #d9e3f2); display: flex; align-items: center; justify-content: center; }
.fill { flex: 1; background: linear-gradient(#7f9ed0, #a2bee6); }
.sheets { display: flex; font-size: 12px; line-height: 15px; }
.sheets button { height: 16px; width: 74px; margin-right: -13px; justify-content: flex-start; background: linear-gradient(#c9dcf6, #c9dcf6) 13px 0 no-repeat; }
.sheets .new { width: 44px; }
.sheets .new svg + svg { margin-left: 4px; }
.sheets span { margin-left: 8px; }
.sheets .on { width: 71px; margin-right: 0; background: linear-gradient(#fff, #fff) 13px 0 no-repeat; font-weight: 700; }
.sheets .on span { margin-left: 5px; }
.nav { display: flex; width: 62px; background: #cfe0f8; justify-content: space-around; }

/* status bar */
.status { flex: none; height: 22px; display: flex; justify-content: space-between; background: linear-gradient(#d9e8fb, #c6dcf7 40%, #aecdf3 45%, #c3dbf8); border-top: 1px solid #5b82b8; color: #14245a; }
.ready { padding: 3px 8px 0 7px; border-right: 1px solid #94b5e0; }
.right { display: flex; align-items: center; gap: 2px; padding: 0 5px 0 5px; background: linear-gradient(#b4d0f5, #83aee6 45%, #6f9cdb 50%, #86b2ec); border-left: 1px solid #567db0; }
.views { display: flex; margin-right: 6px; border: 1px solid #7e9cc6; border-radius: 2px; background: #b9c8dc; }
.views button { width: 19px; height: 16px; }
.views .hot { background: linear-gradient(#fcd9a4, #fdc25f); }
.pct { margin-right: 7px; }
.right input { appearance: none; width: 98px; height: 16px; background: linear-gradient(#33557f, #33557f) 0 8px / 100% 1px no-repeat; }
.right input::-webkit-slider-thumb { appearance: none; width: 9px; height: 13px; background: linear-gradient(90deg, #44597d 1px, #eef3fa 1px, #cfdcee 8px, #44597d 8px); border-top: 1px solid #44597d; clip-path: polygon(0 0, 100% 0, 100% 65%, 50% 100%, 0 65%); }
```
